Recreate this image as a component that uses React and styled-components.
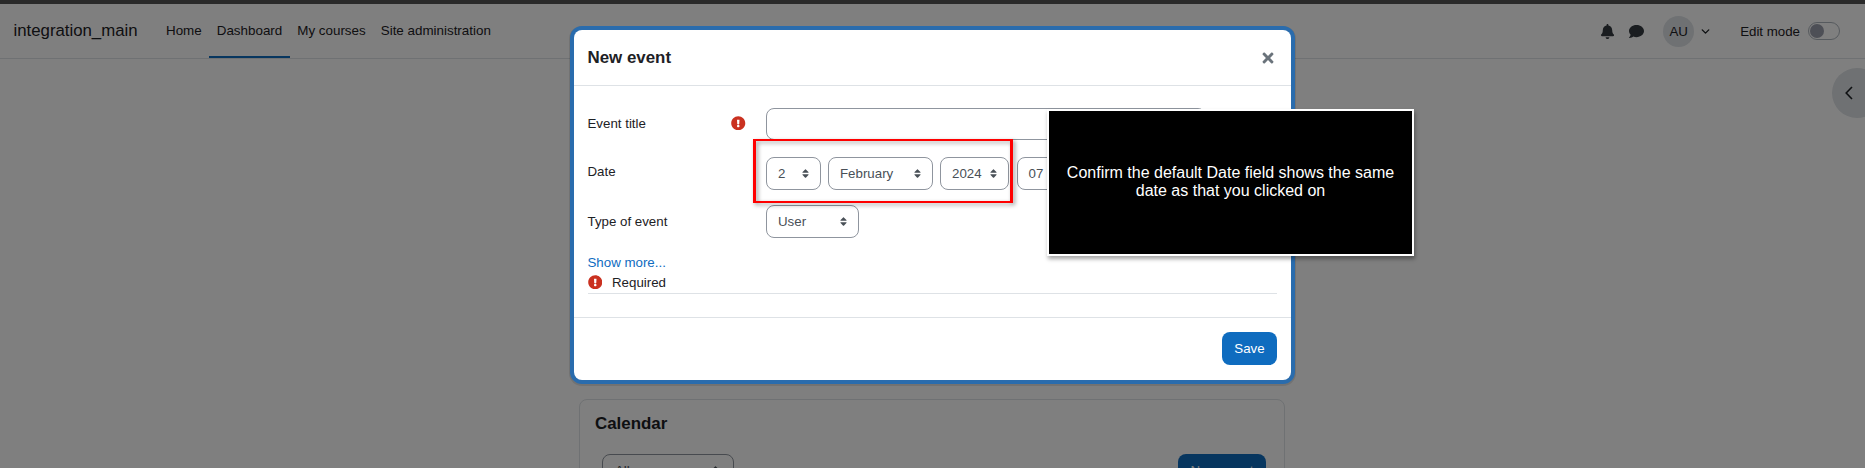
import React from 'react'
import styled, { createGlobalStyle } from 'styled-components'
import { FaBell, FaComment, FaExclamationCircle, FaSort, FaTimes } from 'react-icons/fa'
import { ChevronDown } from 'lucide-react'

const GlobalStyle = createGlobalStyle`
    html, body {
        margin: 0;
        height: 468px;
        overflow: hidden;
        background: #fff;
        font-family: "Liberation Sans", Arial, sans-serif;
        color: #1d2125;
    }
`

const Page = styled.div`
    position: relative;
    height: 468px;
    overflow: hidden;
`

const TopStrip = styled.div`
    height: 4px;
    background: #555;
`

const Navbar = styled.header`
    display: flex;
    align-items: stretch;
    height: 54px;
    padding: 0 25px 0 13.5px;
    border-bottom: 1px solid #dee2e6;
`

const Brand = styled.div`
    display: flex;
    align-items: center;
    width: 145px;
    font-size: 16.8px;
`

const NavList = styled.nav`
    display: flex;
    flex: 1;
`

const NavLink = styled.a`
    display: flex;
    align-items: center;
    padding: 0 7.5px;
    font-size: 13.4px;
    border-bottom: 2px solid ${props => (props.$active ? '#0f6cbf' : 'transparent')};
`

const UserArea = styled.div`
    display: flex;
    align-items: center;
`

const NavIcon = styled.span`
    display: flex;
    justify-content: center;
    width: 15px;
    margin-right: 14px;
    font-size: 15px;
    color: #343a40;
`

const Avatar = styled.div`
    display: flex;
    align-items: center;
    justify-content: center;
    width: 31px;
    height: 31px;
    margin-left: 5px;
    border-radius: 50%;
    background: #dee2e6;
    font-size: 13.3px;
`

const UserCaret = styled.span`
    display: flex;
    margin: 0 28px 0 5px;
`

const EditLabel = styled.span`
    font-size: 13.3px;
`

const Toggle = styled.div`
    display: flex;
    align-items: center;
    box-sizing: border-box;
    width: 32px;
    height: 18px;
    margin-left: 8px;
    padding-left: 1px;
    border: 1px solid #adb5bd;
    border-radius: 9px;
`

const ToggleKnob = styled.div`
    width: 14px;
    height: 14px;
    border-radius: 50%;
    background: #9a9eac;
`

const Main = styled.main`
    padding: 340px 1px 0 0;
`

const CalendarCard = styled.section`
    box-sizing: border-box;
    width: 706px;
    height: 200px;
    margin: 0 auto;
    padding: 14px 18px 0 15px;
    border: 1px solid #dee2e6;
    border-radius: 8px;
`

const CardTitle = styled.h2`
    margin: 0 0 20px;
    font-size: 16.9px;
    line-height: 20px;
    font-weight: 700;
`

const CardActions = styled.div`
    display: flex;
    justify-content: space-between;
    padding-left: 7px;
`

const CourseFilter = styled.div`
    display: flex;
    align-items: center;
    justify-content: space-between;
    box-sizing: border-box;
    width: 132px;
    height: 33px;
    padding: 0 12px;
    border: 1px solid #8f959e;
    border-radius: 8px;
    font-size: 13.3px;
    color: #495057;
`

const NewEventButton = styled.div`
    display: flex;
    align-items: center;
    justify-content: center;
    width: 88px;
    height: 33px;
    border-radius: 8px;
    background: #0f6cbf;
    color: #fff;
    font-size: 13.3px;
`

const DrawerToggle = styled.div`
    position: absolute;
    top: 68px;
    left: 1832px;
    display: flex;
    align-items: center;
    box-sizing: border-box;
    width: 50px;
    height: 50px;
    padding-left: 13px;
    border-radius: 50%;
    background: #dee2e6;
    color: #1d2125;
`

const Backdrop = styled.div`
    position: absolute;
    inset: 0;
    background: rgba(0, 0, 0, 0.5);
`

const Modal = styled.div`
    position: absolute;
    top: 30px;
    left: 574px;
    width: 717px;
    height: 350px;
    border-radius: 8px;
    background: #fff;
    box-shadow: 0 0 0 4px #2a6cad, 0 1px 0 5px rgba(0, 0, 0, 0.1);
`

const ModalHeader = styled.div`
    display: flex;
    align-items: center;
    justify-content: space-between;
    height: 55px;
    padding: 0 14px 0 13.5px;
    border-bottom: 1px solid #dee2e6;
`

const ModalTitle = styled.h5`
    margin: 0;
    font-size: 16.9px;
    font-weight: 700;
`

const CloseButton = styled.span`
    display: flex;
    margin-right: 1px;
    font-size: 16px;
    color: #6a737b;
`

const ModalBody = styled.div`
    box-sizing: border-box;
    height: 232px;
    padding: 22px 14px 0 13.5px;
    border-bottom: 1px solid #dee2e6;
`

const FormRow = styled.div`
    display: grid;
    grid-template-columns: 143.5px 35px 1fr;
    align-items: center;
    margin-bottom: ${props => props.$gap}px;
`

const FieldLabel = styled.label`
    font-size: 13.3px;
    padding-bottom: ${props => props.$raise}px;
`

const ErrorIcon = styled.span`
    display: flex;
    padding-bottom: ${props => props.$raise || 0}px;
    font-size: 14.5px;
    color: #ca3120;
`

const TextInput = styled.div`
    box-sizing: border-box;
    width: 440px;
    height: 32px;
    border: 1px solid #8f959e;
    border-radius: 8px;
`

const SelectGroup = styled.div`
    display: flex;
    gap: 7.5px;
`

const SelectBox = styled.div`
    display: flex;
    align-items: center;
    justify-content: space-between;
    box-sizing: border-box;
    width: ${props => props.$width}px;
    height: 33px;
    padding: 0 11px;
    border: 1px solid #8f959e;
    border-radius: 8px;
    font-size: 13.3px;
    color: #495057;

    svg {
        color: #495057;
        font-size: 11px;
        margin-right: -2px;
    }
`

const ShowMore = styled.a`
    display: block;
    margin-top: 16px;
    font-size: 13.3px;
    line-height: 18px;
    color: #0f6cbf;
`

const RequiredNote = styled.div`
    display: flex;
    align-items: center;
    gap: 10px;
    height: 20px;
    padding-bottom: 1px;
    border-bottom: 1px solid #dee2e6;
    font-size: 13.3px;
`

const ModalFooter = styled.div`
    display: flex;
    justify-content: flex-end;
    padding: 14px;
`

const SaveButton = styled.button`
    width: 55px;
    height: 33px;
    padding: 0;
    border: 0;
    border-radius: 8px;
    background: #0f6cbf;
    color: #fff;
    font-family: inherit;
    font-size: 13.3px;
`

const Highlight = styled.div`
    position: absolute;
    top: 139px;
    left: 753px;
    width: 254px;
    height: 60px;
    border-style: solid;
    border-color: #f00;
    border-width: 2px 3px;
    filter: drop-shadow(2px 2px 2px rgba(0, 0, 0, 0.4));
`

const Annotation = styled.div`
    position: absolute;
    top: 109px;
    left: 1047px;
    display: flex;
    align-items: center;
    justify-content: center;
    box-sizing: border-box;
    width: 367px;
    height: 147px;
    padding: 0 10px 2px;
    border: 2px solid #fff;
    background: #000;
    box-shadow: 1px 3px 4px rgba(0, 0, 0, 0.35);
    color: #fff;
    font-size: 16px;
    line-height: 18px;
    text-align: center;
`

const App = () => {
    return (
        <Page>
            <GlobalStyle />
            <TopStrip />
            <Navbar>
                <Brand>integration_main</Brand>
                <NavList>
                    <NavLink>Home</NavLink>
                    <NavLink $active>Dashboard</NavLink>
                    <NavLink>My courses</NavLink>
                    <NavLink>Site administration</NavLink>
                </NavList>
                <UserArea>
                    <NavIcon><FaBell /></NavIcon>
                    <NavIcon><FaComment /></NavIcon>
                    <Avatar>AU</Avatar>
                    <UserCaret><ChevronDown size={13} strokeWidth={2.6} /></UserCaret>
                    <EditLabel>Edit mode</EditLabel>
                    <Toggle><ToggleKnob /></Toggle>
                </UserArea>
            </Navbar>
            <Main>
                <CalendarCard>
                    <CardTitle>Calendar</CardTitle>
                    <CardActions>
                        <CourseFilter>All courses<FaSort size={11} /></CourseFilter>
                        <NewEventButton>New event</NewEventButton>
                    </CardActions>
                </CalendarCard>
            </Main>
            <DrawerToggle>
                <svg width="8" height="14" viewBox="0 0 8 14" fill="none" stroke="currentColor" strokeWidth="1.6">
                    <path d="M7 1 1.2 7 7 13" />
                </svg>
            </DrawerToggle>
            <Backdrop />
            <Modal>
                <ModalHeader>
                    <ModalTitle>New event</ModalTitle>
                    <CloseButton><FaTimes /></CloseButton>
                </ModalHeader>
                <ModalBody>
                    <FormRow $gap={17}>
                        <FieldLabel $raise={2}>Event title</FieldLabel>
                        <ErrorIcon $raise={2}><FaExclamationCircle /></ErrorIcon>
                        <TextInput />
                    </FormRow>
                    <FormRow $gap={15}>
                        <FieldLabel $raise={5}>Date</FieldLabel>
                        <span />
                        <SelectGroup>
                            <SelectBox $width={54.5}>2<FaSort /></SelectBox>
                            <SelectBox $width={104.5}>February<FaSort /></SelectBox>
                            <SelectBox $width={69}>2024<FaSort /></SelectBox>
                            <SelectBox $width={60}>07<FaSort /></SelectBox>
                        </SelectGroup>
                    </FormRow>
                    <FormRow $gap={1}>
                        <FieldLabel $raise={1}>Type of event</FieldLabel>
                        <span />
                        <SelectBox $width={93}>User<FaSort /></SelectBox>
                    </FormRow>
                    <ShowMore>Show more...</ShowMore>
                    <RequiredNote>
                        <ErrorIcon><FaExclamationCircle /></ErrorIcon>
                        Required
                    </RequiredNote>
                </ModalBody>
                <ModalFooter>
                    <SaveButton>Save</SaveButton>
                </ModalFooter>
            </Modal>
            <Highlight />
            <Annotation>Confirm the default Date field shows the same date as that you clicked on</Annotation>
        </Page>
    )
}

export default App
